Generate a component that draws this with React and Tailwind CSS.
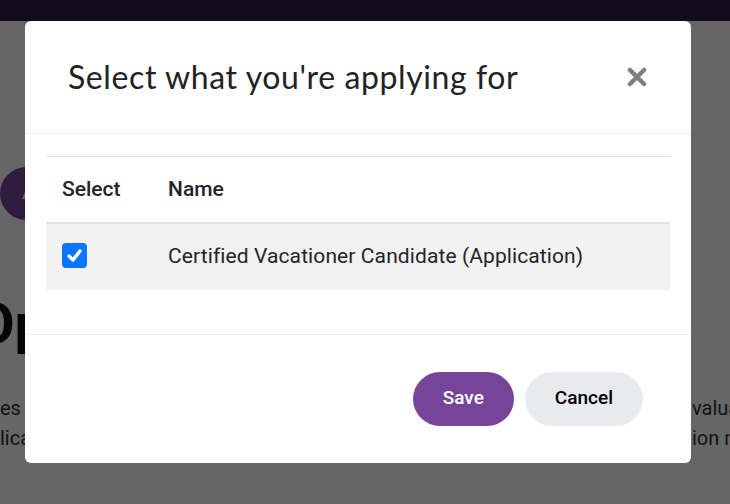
import React from 'react';

const BackgroundPage = () => (
  <div className="font-['Roboto',sans-serif]">
    <div className="h-[21px] bg-[#2d1e41]" />
    <div className="pt-[146px]">
      <button className="h-[53px] rounded-full bg-[#764599] pl-[22px] pr-6 text-[19px] font-medium text-white">
        Apply now
      </button>
      <h2 className="ml-[-24px] mt-[71px] whitespace-nowrap text-[56px] font-bold leading-[67px] text-[#111]">
        Open Applications
      </h2>
      <div className="mt-[35px] text-[20px] leading-[30px] text-[#333]">
        <div className="flex whitespace-nowrap">
          <span>es pertaining to certification and training</span>
          <span className="ml-auto w-[38px] overflow-hidden">valuated</span>
        </div>
        <div className="flex whitespace-nowrap">
          <span>lication for each program you choose</span>
          <span className="ml-auto w-[38px] overflow-hidden">ion needed</span>
        </div>
      </div>
    </div>
  </div>
);

const CloseIcon = () => (
  <svg width="20" height="20" viewBox="0 0 20 20">
    <path d="M3 3 L17 17 M17 3 L3 17" stroke="#7f7f7f" strokeWidth="4.5" strokeLinecap="round" />
  </svg>
);

const Checked = () => (
  <div className="flex h-[25px] w-[25px] items-center justify-center rounded-[4px] bg-[#0b75ff]">
    <svg width="17" height="17" viewBox="0 0 17 17">
      <path d="M3 9 L7 13 L14 4" fill="none" stroke="white" strokeWidth="3.4" strokeLinecap="round" strokeLinejoin="round" />
    </svg>
  </div>
);

const App = () => {
  return (
    <div className="relative h-[504px] w-[730px] overflow-hidden bg-white">
      <BackgroundPage />
      <div className="absolute inset-0 bg-black/60" />

      <div className="absolute left-[25px] top-[21px] w-[666px] rounded-[6px] bg-white font-['Roboto',sans-serif] text-[#212529]">
        <div className="flex h-[113px] items-center justify-between border-b border-[#eeeeee] pl-[43px] pr-[44px]">
          <h5 className="font-['Lato',sans-serif] text-[32px] leading-none tracking-[0.6px] text-[#222]">
            Select what you're applying for
          </h5>
          <button className="flex items-center justify-center">
            <CloseIcon />
          </button>
        </div>

        <div className="px-[21px] pb-[44px] pt-[22px]">
          <table className="w-full table-fixed border-collapse text-left">
            <colgroup>
              <col className="w-[106px]" />
              <col />
            </colgroup>
            <thead>
              <tr className="border-t border-[#dee2e6]">
                <th className="h-[66px] border-b-2 border-[#dee2e6] px-4 align-middle text-[21px] font-medium">Select</th>
                <th className="h-[66px] border-b-2 border-[#dee2e6] px-4 align-middle text-[21px] font-medium">Name</th>
              </tr>
            </thead>
            <tbody>
              <tr className="bg-[#f2f2f2]">
                <td className="h-[67px] px-4 align-middle">
                  <div className="-mt-[3px]">
                    <Checked />
                  </div>
                </td>
                <td className="h-[67px] px-4 align-middle text-[21px] tracking-[0.1px]">
                  Certified Vacationer Candidate (Application)
                </td>
              </tr>
            </tbody>
          </table>
        </div>

        <div className="flex h-[129px] items-center justify-end gap-[11px] border-t border-[#eeeeee] pr-[48px]">
          <button className="h-[54px] rounded-full bg-[#764599] px-[30px] text-[19px] font-medium text-white">
            Save
          </button>
          <button className="h-[54px] rounded-full bg-[#e8eaed] px-[30px] text-[19px] font-medium text-black">
            Cancel
          </button>
        </div>
      </div>
    </div>
  );
};

export default App;
